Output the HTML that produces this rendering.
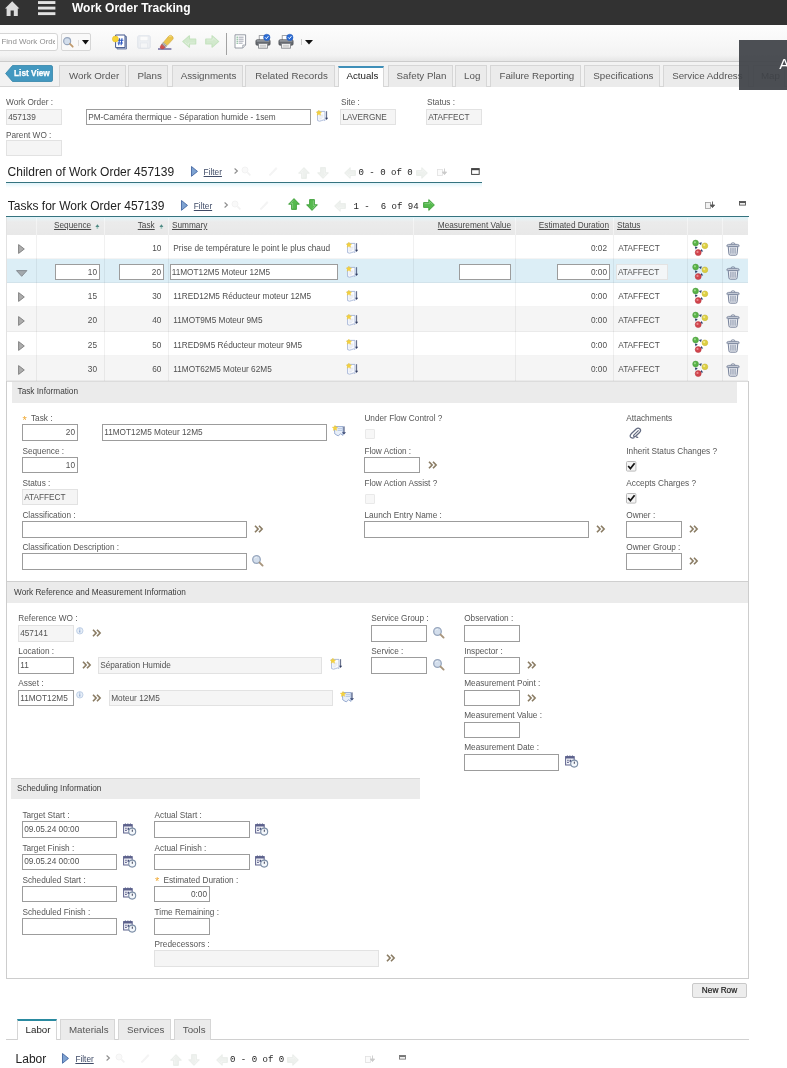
<!DOCTYPE html>
<html><head><meta charset="utf-8"><title>Work Order Tracking</title>
<style>
html,body{margin:0;padding:0;background:#fff}
body{will-change:transform;width:787px;height:1068px;position:relative;overflow:hidden;font-family:"Liberation Sans",sans-serif;font-size:8.25px;color:#4a4a4a}
.abs,.ic,.lb,.in,.tx,.tab,.hd,.sec{position:absolute;box-sizing:content-box;white-space:nowrap}
.ic{display:block;overflow:visible}
.lb{font-size:8.25px;color:#565656;line-height:10px}
.req{color:#f0a830;display:inline-block;width:8.6px;font-size:11px;line-height:6px;vertical-align:-2.5px;text-align:left}
.in{border:1px solid #9c9c9c;background:#fff;padding:0 2px 0 1.2px;font-size:8.25px;color:#525252;overflow:hidden}
.in.ro{border-color:#e2e2e2;background:#f5f5f5}
.tx{font-size:8.25px;color:#4f4f4f;line-height:10px}
.tab{top:65px;height:21px;line-height:19px;font-size:9.75px;color:#555;background:#ebebeb;border:1px solid #d6d6d6;border-bottom:none;text-align:center;padding-left:2.8px}
.hd{font-size:12px;color:#222;line-height:14px}
.sec{background:#ebebeb;font-size:8.25px;color:#3c3c3c;height:20px;line-height:21px;padding-left:6px}
.mono{font-family:"Liberation Mono",monospace;font-size:9.05px;color:#1e1e1e}
a.fl{color:#3e4a66;text-decoration:underline}
.th{position:absolute;font-size:8.25px;color:#484848;text-decoration:underline;line-height:10px;white-space:nowrap}
</style></head><body>

<div class="abs" style="left:0;top:0;width:787px;height:25px;background:#323232"></div>
<svg class="ic" style="left:4.5px;top:1px" width="15" height="15.4" viewBox="0 0 15 15.4" ><path d="M7.2 0.3 L14.4 7.6 L12.8 7.6 L12.8 15 L8.8 15 L8.8 9.4 L5.6 9.4 L5.6 15 L1.6 15 L1.6 7.6 L0 7.6 Z" fill="#dcdcdc"/></svg>
<svg class="ic" style="left:37.8px;top:1px" width="17.4" height="14.2" viewBox="0 0 17.4 14.2" ><rect x="0" y="0.1" width="17.4" height="2.9" fill="#e2e2e2"/><rect x="0" y="5.65" width="17.4" height="2.9" fill="#e2e2e2"/><rect x="0" y="11.2" width="17.4" height="2.9" fill="#e2e2e2"/></svg>
<div class="abs" style="left:72px;top:1px;font-size:12px;font-weight:bold;color:#fff;line-height:15px">Work Order Tracking</div>
<div class="abs" style="left:0;top:25px;width:787px;height:36px;background:linear-gradient(to bottom,#fdfdfd 0,#f7f7f7 55%,#f3f3f3 84%,#e6e6e6 100%);border-bottom:1px solid #cbcbcb"></div>
<div class="abs" style="left:-3px;top:33px;width:59.2px;height:16px;border:1px solid #d6d6d6;border-radius:3px;background:#fff"><div class="abs" style="left:3.5px;top:0;width:53.6px;height:16px;overflow:hidden;line-height:16.5px;font-size:7.9px;color:#8e8e8e">Find Work Order</div></div>
<div class="abs" style="left:61px;top:33px;width:28px;height:16px;border:1px solid #d6d6d6;border-radius:2px;background:#f9f9f9"></div>
<svg class="ic" style="left:62.8px;top:37.2px" width="11" height="11" viewBox="0 0 12 12" ><circle cx="4.5" cy="4.5" r="3.8" fill="#d3deec" stroke="#97a6bd" stroke-width="1.3"/><path d="M7.6 7.6 L10.6 10.6" stroke="#c09a6c" stroke-width="1.9" stroke-linecap="round"/></svg>
<div class="abs" style="left:78px;top:40px;width:1px;height:6px;background:#dcdcdc"></div>
<svg class="ic" style="left:81.5px;top:40.3px" width="7" height="4.6" viewBox="0 0 7 4.6" ><path d="M0 0 L7 0 L3.5 4.4 Z" fill="#111"/></svg>
<svg class="ic" style="left:112px;top:33.5px" width="16" height="16" viewBox="0 0 16 16" ><path d="M5 2.5 H14.5 V15 H5 Z" fill="#b8c4dc" stroke="#5a6c98" stroke-width="0.8"/><path d="M3.6 1 H13 V13.6 H3.6 Z" fill="#fff" stroke="#42578c" stroke-width="1"/><path d="M6 6.2h5.4M5.6 9h5.4M7.6 4.2l-0.9 7M10 4.2l-0.9 7" stroke="#2a55c0" stroke-width="1.1"/><circle cx="3.4" cy="5" r="3" fill="#f7d436" stroke="#e6b81c" stroke-width="0.5"/></svg>
<svg class="ic" style="left:137px;top:35px" width="14" height="14" viewBox="0 0 14 14" ><g opacity="0.4"><rect x="0.8" y="0.8" width="12.4" height="12.4" rx="1" fill="#dfe5ee" stroke="#b7c2d3" stroke-width="1"/><rect x="3" y="1.2" width="8" height="4.6" fill="#fff" stroke="#c3ccd9" stroke-width="0.6"/><rect x="3.6" y="8" width="6.8" height="5" fill="#f3f5f9" stroke="#c3ccd9" stroke-width="0.6"/></g></svg>
<svg class="ic" style="left:157px;top:33.6px" width="18" height="16" viewBox="0 0 18 16" ><path d="M1 15 H14.4" stroke="#4a4488" stroke-width="1.2"/><path d="M6.4 8.4 L11.8 2 Q13.2 0.6 14.8 1.8 L15.8 2.8 Q16.8 4.2 15.6 5.6 L10 11.6 Z" fill="#ebc54c" stroke="#cfa53a" stroke-width="0.6"/><path d="M12.2 2.4 Q13.4 1.6 14.4 2.6" fill="none" stroke="#f8e9a8" stroke-width="0.9"/><path d="M6.4 8.4 L10 11.6 L8.2 13.4 L4.6 10.4 Z" fill="#e6e6e6" stroke="#8a8a8a" stroke-width="0.5"/><path d="M5.7 9.2 L9.3 12.3 M5 10 L8.6 13" stroke="#555" stroke-width="0.6"/><path d="M4.6 10.4 L8.2 13.4 L6.2 14.8 Q4.4 15.2 3.4 14 Q2.8 12.6 4.6 10.4 Z" fill="#d2504e" stroke="#b03c3a" stroke-width="0.5"/></svg>
<svg class="ic" style="left:182px;top:35px" width="14.5" height="13" viewBox="0 0 12 12" preserveAspectRatio="none"><g transform="rotate(180 6 6)"><path d="M11.4 6 L5.8 0.6 L5.8 3.6 L0.6 3.6 L0.6 8.4 L5.8 8.4 L5.8 11.4 Z" fill="#d0e9cb" stroke="#c2e1bc" stroke-width="0.9" stroke-linejoin="round" opacity="0.95"/><path d="M1.4 4.6 H6.6 V2.6 L9.6 5.4" fill="none" stroke="#fff" stroke-width="0.7" opacity="0.33249999999999996"/></g></svg>
<svg class="ic" style="left:204.5px;top:35px" width="14.5" height="13" viewBox="0 0 12 12" preserveAspectRatio="none"><g transform="rotate(0 6 6)"><path d="M11.4 6 L5.8 0.6 L5.8 3.6 L0.6 3.6 L0.6 8.4 L5.8 8.4 L5.8 11.4 Z" fill="#d0e9cb" stroke="#c2e1bc" stroke-width="0.9" stroke-linejoin="round" opacity="0.95"/><path d="M1.4 4.6 H6.6 V2.6 L9.6 5.4" fill="none" stroke="#fff" stroke-width="0.7" opacity="0.33249999999999996"/></g></svg>
<div class="abs" style="left:226px;top:33px;width:1px;height:22px;background:#a2a2a2"></div>
<svg class="ic" style="left:233.5px;top:34px" width="13" height="15" viewBox="0 0 13 15" ><path d="M1 0.8 H11.6 V11 L8.8 14 H1 Z" fill="#fff" stroke="#8c929c" stroke-width="0.9"/><path d="M8.8 14 V11 H11.6" fill="#e4e6ea" stroke="#8c929c" stroke-width="0.7"/><path d="M2.6 3.2h1.2M2.6 5.2h1.2M2.6 7.2h1.2M2.6 9.2h1.2" stroke="#4f9a68" stroke-width="1"/><path d="M4.6 3.2h5M4.6 5.2h5M4.6 7.2h5M4.6 9.2h4" stroke="#8a90a0" stroke-width="0.8"/></svg>
<svg class="ic" style="left:254.5px;top:34px" width="17" height="15" viewBox="0 0 17 15" ><rect x="4.2" y="1.6" width="7.6" height="5" fill="#fff" stroke="#8a8d92" stroke-width="0.8"/><rect x="0.9" y="5.8" width="14.2" height="5.4" rx="1.2" fill="#666a70" stroke="#4a4d52" stroke-width="0.7"/><rect x="1.6" y="6.2" width="12.8" height="1.4" fill="#9a9ea4"/><rect x="3.6" y="9.6" width="8.8" height="4.6" fill="#efefef" stroke="#7c7f84" stroke-width="0.8"/><path d="M5 11.4h6M5 12.8h6" stroke="#b4b4b4" stroke-width="0.6"/><circle cx="11.8" cy="3.4" r="3.2" fill="#2c6cd4" stroke="#2257b0" stroke-width="0.5"/><path d="M10.2 3.4l1.2 1.3 2-2.5" fill="none" stroke="#fff" stroke-width="1"/></svg>
<svg class="ic" style="left:277.5px;top:34px" width="17" height="15" viewBox="0 0 17 15" ><rect x="4.2" y="1.6" width="7.6" height="5" fill="#fff" stroke="#8a8d92" stroke-width="0.8"/><rect x="0.9" y="5.8" width="14.2" height="5.4" rx="1.2" fill="#666a70" stroke="#4a4d52" stroke-width="0.7"/><rect x="1.6" y="6.2" width="12.8" height="1.4" fill="#9a9ea4"/><rect x="3.6" y="9.6" width="8.8" height="4.6" fill="#efefef" stroke="#7c7f84" stroke-width="0.8"/><path d="M5 11.4h6M5 12.8h6" stroke="#b4b4b4" stroke-width="0.6"/><circle cx="11.8" cy="3.4" r="3.2" fill="#2c6cd4" stroke="#2257b0" stroke-width="0.5"/><path d="M10.2 3.4l1.2 1.3 2-2.5" fill="none" stroke="#fff" stroke-width="1"/></svg>
<div class="abs" style="left:301px;top:39px;width:1px;height:6px;background:#c8c8c8"></div>
<svg class="ic" style="left:305px;top:40px" width="8" height="5" viewBox="0 0 8 5" ><path d="M0 0 L8 0 L4 4.6 Z" fill="#111"/></svg>
<div class="abs" style="left:0;top:62px;width:787px;height:24px;background:#f2f2f2;border-bottom:1px solid #d6d6d6"></div>
<svg class="ic" style="left:5px;top:65px" width="48" height="18" viewBox="0 0 48 18" ><path d="M7.5 0.5 H46 Q47.5 0.5 47.5 2 V15 Q47.5 16.5 46 16.5 H7.5 L0.6 8.5 Z" fill="#4398c0" stroke="#3585aa" stroke-width="0.8"/><text x="26.9" y="10.8" font-family="Liberation Sans,sans-serif" font-size="8.25" font-weight="bold" fill="#fff" stroke="#fff" stroke-width="0.25" text-anchor="middle">List View</text></svg>
<div class="tab" style="left:59.4px;width:61.8px">Work Order</div>
<div class="tab" style="left:128.4px;width:34.8px">Plans</div>
<div class="tab" style="left:171.6px;width:66.3px">Assignments</div>
<div class="tab" style="left:245.4px;width:84.60000000000001px">Related Records</div>
<div class="tab" style="left:337.7px;width:41.89999999999999px;top:66px;height:19px;background:#fff;border-top:2px solid #3f8fb8;color:#222;line-height:16px">Actuals</div>
<div class="tab" style="left:387.7px;width:60.10000000000004px">Safety Plan</div>
<div class="tab" style="left:454.8px;width:27.2px">Log</div>
<div class="tab" style="left:490px;width:86.2px">Failure Reporting</div>
<div class="tab" style="left:584px;width:71.2px">Specifications</div>
<div class="tab" style="left:662.5px;width:82.2px">Service Address</div>
<div class="tab" style="left:753px;width:27.2px">Map</div>
<div class="abs" style="left:739px;top:40px;width:48px;height:49.5px;background:rgba(62,66,71,0.93)"></div>
<div class="abs" style="left:779.2px;top:54.8px;font-size:15px;color:#fff;line-height:17px">A</div>
<div class="lb" style="left:6px;top:97.5px">Work Order :</div>
<div class="in ro" style="left:6px;top:109px;width:50.8px;height:14px;line-height:15.38px;">457139</div>
<div class="in" style="left:86px;top:109px;width:219.8px;height:14px;line-height:15.38px;">PM-Caméra thermique - Séparation humide - 1sem</div>
<svg class="ic" style="left:316px;top:110px" width="13" height="12" viewBox="0 0 13 12" ><path d="M1.6 1.4 H9 V10.4 Q7.4 9.4 5.6 10.6 Q3.6 11.8 1.6 10.6 Z" fill="#fbfcfe" stroke="#a3b3d6" stroke-width="0.9"/><path d="M3.2 5.2h4.2M3.2 7h4.2M3.2 8.8h2.6" stroke="#d3d9e6" stroke-width="0.7"/><path d="M2.9 0 L3.75 1.75 L5.7 2 L4.3 3.35 L4.65 5.3 L2.9 4.35 L1.15 5.3 L1.5 3.35 L0.1 2 L2.05 1.75 Z" fill="#f6d23c" stroke="#ecc22a" stroke-width="0.3"/><path d="M10.6 1.2v7.4" stroke="#303c62" stroke-width="0.8"/><path d="M9.1 7.8h3l-1.5 2.1z" fill="#303c62"/></svg>
<div class="lb" style="left:341px;top:97.5px">Site :</div>
<div class="in ro" style="left:340.3px;top:109px;width:50.8px;height:14px;line-height:15.38px;">LAVERGNE</div>
<div class="lb" style="left:427px;top:97.5px">Status :</div>
<div class="in ro" style="left:426px;top:109px;width:50.8px;height:14px;line-height:15.38px;">ATAFFECT</div>
<div class="lb" style="left:6px;top:130.5px">Parent WO :</div>
<div class="in ro" style="left:6px;top:140px;width:50.8px;height:14px;line-height:15.38px;"></div>
<div class="hd" style="left:7.6px;top:165px">Children of Work Order 457139</div>
<div class="abs" style="left:6px;top:182px;width:476px;height:1px;background:#35737f"></div>
<div class="abs" style="left:6px;top:183px;width:476px;height:5px;background:linear-gradient(to bottom,#def3f9,#f4fbfd 60%,#fff)"></div>
<svg class="ic" style="left:190.8px;top:165.8px" width="7.2" height="10.8" viewBox="0 0 7.2 10.8" ><path d="M0.5 0.5 L6.5 5.4 L0.5 10.3 Z" fill="#7ea3d2" stroke="#4467a2" stroke-width="0.9"/></svg><div class="tx" style="left:203.60000000000002px;top:167.5px"><a class="fl">Filter</a></div><svg class="ic" style="left:233.6px;top:168px" width="4" height="6" viewBox="0 0 4 6" ><path d="M0.6 0.5 L3.4 3 L0.6 5.5" fill="none" stroke="#8c8c8c" stroke-width="1.1"/></svg><svg class="ic" style="left:241px;top:166px" width="10" height="10" viewBox="0 0 10 10" ><g opacity="0.09"><circle cx="4" cy="4" r="3" fill="#c8c8c8" stroke="#777"/><path d="M6.4 6.4 L9.4 9.4" stroke="#777" stroke-width="1.6"/></g></svg><svg class="ic" style="left:268px;top:166px" width="10" height="10" viewBox="0 0 10 10" ><g opacity="0.1"><path d="M1 9 L8 1.6 L9 2.8 L2.4 9.4 Z" fill="#999" stroke="#777" stroke-width="0.6"/></g></svg>
<svg class="ic" style="left:298px;top:167px" width="12" height="12" viewBox="0 0 12 12" preserveAspectRatio="none"><g transform="rotate(-90 6 6)"><path d="M11.4 6 L5.8 0.6 L5.8 3.6 L0.6 3.6 L0.6 8.4 L5.8 8.4 L5.8 11.4 Z" fill="#eef1ee" stroke="#e9ece9" stroke-width="0.9" stroke-linejoin="round" opacity="1"/><path d="M1.4 4.6 H6.6 V2.6 L9.6 5.4" fill="none" stroke="#fff" stroke-width="0.7" opacity="0.35"/></g></svg>
<svg class="ic" style="left:317px;top:167px" width="12" height="12" viewBox="0 0 12 12" preserveAspectRatio="none"><g transform="rotate(90 6 6)"><path d="M11.4 6 L5.8 0.6 L5.8 3.6 L0.6 3.6 L0.6 8.4 L5.8 8.4 L5.8 11.4 Z" fill="#eef1ee" stroke="#e9ece9" stroke-width="0.9" stroke-linejoin="round" opacity="1"/><path d="M1.4 4.6 H6.6 V2.6 L9.6 5.4" fill="none" stroke="#fff" stroke-width="0.7" opacity="0.35"/></g></svg>
<svg class="ic" style="left:344px;top:167px" width="12" height="12" viewBox="0 0 12 12" preserveAspectRatio="none"><g transform="rotate(180 6 6)"><path d="M11.4 6 L5.8 0.6 L5.8 3.6 L0.6 3.6 L0.6 8.4 L5.8 8.4 L5.8 11.4 Z" fill="#eef1ee" stroke="#e9ece9" stroke-width="0.9" stroke-linejoin="round" opacity="1"/><path d="M1.4 4.6 H6.6 V2.6 L9.6 5.4" fill="none" stroke="#fff" stroke-width="0.7" opacity="0.35"/></g></svg>
<div class="abs mono" style="left:358.5px;top:167px;line-height:11px">0 - 0 of 0</div>
<svg class="ic" style="left:416px;top:167px" width="12" height="12" viewBox="0 0 12 12" preserveAspectRatio="none"><g transform="rotate(0 6 6)"><path d="M11.4 6 L5.8 0.6 L5.8 3.6 L0.6 3.6 L0.6 8.4 L5.8 8.4 L5.8 11.4 Z" fill="#eef1ee" stroke="#e9ece9" stroke-width="0.9" stroke-linejoin="round" opacity="1"/><path d="M1.4 4.6 H6.6 V2.6 L9.6 5.4" fill="none" stroke="#fff" stroke-width="0.7" opacity="0.35"/></g></svg>
<svg class="ic" style="left:437px;top:168px" width="11" height="9" viewBox="0 0 11 9" ><g opacity="0.3"><rect x="0.5" y="1.5" width="5" height="6" fill="#f2f2f2" stroke="#9a9a9a" stroke-width="0.8"/><path d="M7.5 0.5v5M5.4 4l2.1 2.6L9.6 4z" fill="#555" stroke="#555" stroke-width="0.9"/></g></svg>
<svg class="ic" style="left:471px;top:168px" width="9" height="7" viewBox="0 0 9 7" ><rect x="0.6" y="0.6" width="7.6" height="5.8" fill="#fff" stroke="#444" stroke-width="1"/><rect x="0.6" y="0.6" width="7.6" height="1.6" fill="#444"/></svg>
<div class="hd" style="left:7.8px;top:198.5px">Tasks for Work Order 457139</div>
<div class="abs" style="left:6px;top:216px;width:743px;height:1px;background:#35737f"></div>
<svg class="ic" style="left:180.9px;top:199.8px" width="7.2" height="10.8" viewBox="0 0 7.2 10.8" ><path d="M0.5 0.5 L6.5 5.4 L0.5 10.3 Z" fill="#7ea3d2" stroke="#4467a2" stroke-width="0.9"/></svg><div class="tx" style="left:193.8px;top:201.5px"><a class="fl">Filter</a></div><svg class="ic" style="left:224px;top:202px" width="4" height="6" viewBox="0 0 4 6" ><path d="M0.6 0.5 L3.4 3 L0.6 5.5" fill="none" stroke="#8c8c8c" stroke-width="1.1"/></svg><svg class="ic" style="left:231px;top:200px" width="10" height="10" viewBox="0 0 10 10" ><g opacity="0.09"><circle cx="4" cy="4" r="3" fill="#c8c8c8" stroke="#777"/><path d="M6.4 6.4 L9.4 9.4" stroke="#777" stroke-width="1.6"/></g></svg><svg class="ic" style="left:259px;top:200px" width="10" height="10" viewBox="0 0 10 10" ><g opacity="0.1"><path d="M1 9 L8 1.6 L9 2.8 L2.4 9.4 Z" fill="#999" stroke="#777" stroke-width="0.6"/></g></svg>
<svg class="ic" style="left:288px;top:198.3px" width="12" height="12" viewBox="0 0 12 12" preserveAspectRatio="none"><g transform="rotate(-90 6 6)"><path d="M11.4 6 L5.8 0.6 L5.8 3.6 L0.6 3.6 L0.6 8.4 L5.8 8.4 L5.8 11.4 Z" fill="#56ba4e" stroke="#3d9e38" stroke-width="0.9" stroke-linejoin="round" opacity="1"/><path d="M1.4 4.6 H6.6 V2.6 L9.6 5.4" fill="none" stroke="#fff" stroke-width="0.7" opacity="0.35"/></g></svg>
<svg class="ic" style="left:306.3px;top:198.6px" width="12" height="12" viewBox="0 0 12 12" preserveAspectRatio="none"><g transform="rotate(90 6 6)"><path d="M11.4 6 L5.8 0.6 L5.8 3.6 L0.6 3.6 L0.6 8.4 L5.8 8.4 L5.8 11.4 Z" fill="#56ba4e" stroke="#3d9e38" stroke-width="0.9" stroke-linejoin="round" opacity="1"/><path d="M1.4 4.6 H6.6 V2.6 L9.6 5.4" fill="none" stroke="#fff" stroke-width="0.7" opacity="0.35"/></g></svg>
<svg class="ic" style="left:334px;top:200px" width="12" height="12" viewBox="0 0 12 12" preserveAspectRatio="none"><g transform="rotate(180 6 6)"><path d="M11.4 6 L5.8 0.6 L5.8 3.6 L0.6 3.6 L0.6 8.4 L5.8 8.4 L5.8 11.4 Z" fill="#eef1ee" stroke="#e9ece9" stroke-width="0.9" stroke-linejoin="round" opacity="1"/><path d="M1.4 4.6 H6.6 V2.6 L9.6 5.4" fill="none" stroke="#fff" stroke-width="0.7" opacity="0.35"/></g></svg>
<div class="abs mono" style="left:353.5px;top:200.5px;line-height:11px;white-space:pre">1 -  6 of 94</div>
<svg class="ic" style="left:423px;top:199px" width="12" height="12" viewBox="0 0 12 12" preserveAspectRatio="none"><g transform="rotate(0 6 6)"><path d="M11.4 6 L5.8 0.6 L5.8 3.6 L0.6 3.6 L0.6 8.4 L5.8 8.4 L5.8 11.4 Z" fill="#56ba4e" stroke="#3d9e38" stroke-width="0.9" stroke-linejoin="round" opacity="1"/><path d="M1.4 4.6 H6.6 V2.6 L9.6 5.4" fill="none" stroke="#fff" stroke-width="0.7" opacity="0.35"/></g></svg>
<svg class="ic" style="left:705px;top:201px" width="11" height="9" viewBox="0 0 11 9" ><g opacity="1"><rect x="0.5" y="1.5" width="5" height="6" fill="#f2f2f2" stroke="#9a9a9a" stroke-width="0.8"/><path d="M7.5 0.5v5M5.4 4l2.1 2.6L9.6 4z" fill="#555" stroke="#555" stroke-width="0.9"/></g></svg>
<svg class="ic" style="left:739px;top:201px" width="7" height="5" viewBox="0 0 7 5" ><g opacity="1.0"><rect x="0.5" y="0.5" width="6" height="3.6" fill="#fff" stroke="#555" stroke-width="0.9"/><rect x="0.5" y="0.5" width="6" height="1.6" fill="#555"/></g></svg>
<div class="abs" style="left:7px;top:217px;width:741px;height:18px;background:linear-gradient(to bottom,#dff3f9 0,#eaf0f1 3px,#ebebeb 5px,#e8e8e8 100%)"></div>
<div class="th" style="right:695.8px;top:221px">Sequence</div>
<svg class="ic" style="left:95.3px;top:223.5px" width="5" height="5" viewBox="0 0 5 5" ><path d="M0.4 3 L4.4 3 L2.4 0.2 Z" fill="#4f8a84"/><path d="M1.6 3 h1.6 v1.8 h-1.6z" fill="#9cc4bc"/></svg>
<div class="th" style="right:632.3px;top:221px">Task</div>
<svg class="ic" style="left:158.5px;top:223.5px" width="5" height="5" viewBox="0 0 5 5" ><path d="M0.4 3 L4.4 3 L2.4 0.2 Z" fill="#4f8a84"/><path d="M1.6 3 h1.6 v1.8 h-1.6z" fill="#9cc4bc"/></svg>
<div class="th" style="left:172px;top:221px">Summary</div>
<div class="th" style="right:276px;top:221px">Measurement Value</div>
<div class="th" style="right:178px;top:221px">Estimated Duration</div>
<div class="th" style="left:617px;top:221px">Status</div>
<div class="abs" style="left:7px;top:235px;width:741px;height:24px;background:#fff"></div>
<svg class="ic" style="left:18.3px;top:244px" width="7" height="10" viewBox="0 0 7 10" ><path d="M0.6 0.6 L6.3 5 L0.6 9.4 Z" fill="#adadad" stroke="#858585" stroke-width="1"/></svg>
<div class="tx" style="right:690px;top:244px"></div>
<div class="tx" style="right:625.6px;top:244px">10</div>
<div class="tx" style="left:173.3px;top:244px">Prise de température le point le plus chaud</div>
<div class="tx" style="right:180px;top:244px">0:02</div>
<div class="tx" style="left:618.3px;top:244px">ATAFFECT</div>
<svg class="ic" style="left:346px;top:242px" width="13" height="12" viewBox="0 0 13 12" ><path d="M1.6 1.4 H9 V10.4 Q7.4 9.4 5.6 10.6 Q3.6 11.8 1.6 10.6 Z" fill="#fbfcfe" stroke="#a3b3d6" stroke-width="0.9"/><path d="M3.2 5.2h4.2M3.2 7h4.2M3.2 8.8h2.6" stroke="#d3d9e6" stroke-width="0.7"/><path d="M2.9 0 L3.75 1.75 L5.7 2 L4.3 3.35 L4.65 5.3 L2.9 4.35 L1.15 5.3 L1.5 3.35 L0.1 2 L2.05 1.75 Z" fill="#f6d23c" stroke="#ecc22a" stroke-width="0.3"/><path d="M10.6 1.2v7.4" stroke="#303c62" stroke-width="0.8"/><path d="M9.1 7.8h3l-1.5 2.1z" fill="#303c62"/></svg>
<svg class="ic" style="left:692px;top:240px" width="17" height="16" viewBox="0 0 17 16" ><path d="M6.8 3 L9.8 2.2 L9 5.2 Z M2.8 6.4 L5.8 7 L3.6 9.4 Z M9.4 9 L11.2 11.6 L8.2 11.4 Z" fill="#2f456e"/><circle cx="3.6" cy="3" r="2.9" fill="#58b246" stroke="#46963a" stroke-width="0.5"/><circle cx="12.9" cy="5.8" r="2.9" fill="#dccf42" stroke="#c4b430" stroke-width="0.5"/><circle cx="6.2" cy="12.6" r="3" fill="#d2444c" stroke="#b4323a" stroke-width="0.5"/><circle cx="2.9" cy="2.3" r="1.1" fill="#a8e09a" opacity="0.8"/><circle cx="12.2" cy="5.1" r="1.1" fill="#f6f0a0" opacity="0.8"/><circle cx="5.5" cy="11.9" r="1.1" fill="#f0a0a4" opacity="0.8"/></svg>
<svg class="ic" style="left:726px;top:242px" width="14" height="15" viewBox="0 0 14 15" ><path d="M2.2 4.6 L2.9 11.8 Q3 13.2 4.4 13.2 L9.6 13.2 Q11 13.2 11.1 11.8 L11.8 4.6 Z" fill="#e9ecf1" stroke="#77829a" stroke-width="1"/><path d="M0.8 4.2 Q0.8 2.4 2.6 2.4 H11.4 Q13.2 2.4 13.2 4.2 Z" fill="#dfe3ea" stroke="#77829a" stroke-width="0.9"/><path d="M5 2.2 Q5 0.8 7 0.8 Q9 0.8 9 2.2" fill="none" stroke="#77829a" stroke-width="0.9"/><path d="M4.9 5.8 V11.8 M7 5.8 V11.8 M9.1 5.8 V11.8" stroke="#8d97ac" stroke-width="1.1"/></svg>
<div class="abs" style="left:7px;top:259px;width:741px;height:24px;background:#dceef6"></div>
<svg class="ic" style="left:15.9px;top:269.6px" width="11.4" height="7" viewBox="0 0 11.4 7" ><path d="M0.5 0.6 L10.9 0.6 L5.7 6.3 Z" fill="#a3a9ad" stroke="#7f858a" stroke-width="0.9"/></svg>
<div class="in" style="left:55px;top:264px;width:39.8px;height:14px;line-height:15.38px;text-align:right;">10</div>
<div class="in" style="left:119px;top:264px;width:39.8px;height:14px;line-height:15.38px;text-align:right;">20</div>
<div class="in" style="left:169.5px;top:264px;width:163.8px;height:14px;line-height:15.38px;">11MOT12M5 Moteur 12M5</div>
<div class="in" style="left:459px;top:264px;width:46.8px;height:14px;line-height:15.38px;"></div>
<div class="in" style="left:557px;top:264px;width:47.8px;height:14px;line-height:15.38px;text-align:right;">0:00</div>
<div class="in ro" style="left:615.7px;top:264px;width:47.5px;height:14px;line-height:16px;border-color:#e3e3e3;background:#f3f6f8">ATAFFECT</div>
<svg class="ic" style="left:346px;top:266px" width="13" height="12" viewBox="0 0 13 12" ><path d="M1.6 1.4 H9 V10.4 Q7.4 9.4 5.6 10.6 Q3.6 11.8 1.6 10.6 Z" fill="#fbfcfe" stroke="#a3b3d6" stroke-width="0.9"/><path d="M3.2 5.2h4.2M3.2 7h4.2M3.2 8.8h2.6" stroke="#d3d9e6" stroke-width="0.7"/><path d="M2.9 0 L3.75 1.75 L5.7 2 L4.3 3.35 L4.65 5.3 L2.9 4.35 L1.15 5.3 L1.5 3.35 L0.1 2 L2.05 1.75 Z" fill="#f6d23c" stroke="#ecc22a" stroke-width="0.3"/><path d="M10.6 1.2v7.4" stroke="#303c62" stroke-width="0.8"/><path d="M9.1 7.8h3l-1.5 2.1z" fill="#303c62"/></svg>
<svg class="ic" style="left:692px;top:264px" width="17" height="16" viewBox="0 0 17 16" ><path d="M6.8 3 L9.8 2.2 L9 5.2 Z M2.8 6.4 L5.8 7 L3.6 9.4 Z M9.4 9 L11.2 11.6 L8.2 11.4 Z" fill="#2f456e"/><circle cx="3.6" cy="3" r="2.9" fill="#58b246" stroke="#46963a" stroke-width="0.5"/><circle cx="12.9" cy="5.8" r="2.9" fill="#dccf42" stroke="#c4b430" stroke-width="0.5"/><circle cx="6.2" cy="12.6" r="3" fill="#d2444c" stroke="#b4323a" stroke-width="0.5"/><circle cx="2.9" cy="2.3" r="1.1" fill="#a8e09a" opacity="0.8"/><circle cx="12.2" cy="5.1" r="1.1" fill="#f6f0a0" opacity="0.8"/><circle cx="5.5" cy="11.9" r="1.1" fill="#f0a0a4" opacity="0.8"/></svg>
<svg class="ic" style="left:726px;top:266px" width="14" height="15" viewBox="0 0 14 15" ><path d="M2.2 4.6 L2.9 11.8 Q3 13.2 4.4 13.2 L9.6 13.2 Q11 13.2 11.1 11.8 L11.8 4.6 Z" fill="#e9ecf1" stroke="#77829a" stroke-width="1"/><path d="M0.8 4.2 Q0.8 2.4 2.6 2.4 H11.4 Q13.2 2.4 13.2 4.2 Z" fill="#dfe3ea" stroke="#77829a" stroke-width="0.9"/><path d="M5 2.2 Q5 0.8 7 0.8 Q9 0.8 9 2.2" fill="none" stroke="#77829a" stroke-width="0.9"/><path d="M4.9 5.8 V11.8 M7 5.8 V11.8 M9.1 5.8 V11.8" stroke="#8d97ac" stroke-width="1.1"/></svg>
<div class="abs" style="left:7px;top:283px;width:741px;height:24px;background:#fff"></div>
<svg class="ic" style="left:18.3px;top:292px" width="7" height="10" viewBox="0 0 7 10" ><path d="M0.6 0.6 L6.3 5 L0.6 9.4 Z" fill="#adadad" stroke="#858585" stroke-width="1"/></svg>
<div class="tx" style="right:690px;top:292px">15</div>
<div class="tx" style="right:625.6px;top:292px">30</div>
<div class="tx" style="left:173.3px;top:292px">11RED12M5 Réducteur moteur 12M5</div>
<div class="tx" style="right:180px;top:292px">0:00</div>
<div class="tx" style="left:618.3px;top:292px">ATAFFECT</div>
<svg class="ic" style="left:346px;top:290px" width="13" height="12" viewBox="0 0 13 12" ><path d="M1.6 1.4 H9 V10.4 Q7.4 9.4 5.6 10.6 Q3.6 11.8 1.6 10.6 Z" fill="#fbfcfe" stroke="#a3b3d6" stroke-width="0.9"/><path d="M3.2 5.2h4.2M3.2 7h4.2M3.2 8.8h2.6" stroke="#d3d9e6" stroke-width="0.7"/><path d="M2.9 0 L3.75 1.75 L5.7 2 L4.3 3.35 L4.65 5.3 L2.9 4.35 L1.15 5.3 L1.5 3.35 L0.1 2 L2.05 1.75 Z" fill="#f6d23c" stroke="#ecc22a" stroke-width="0.3"/><path d="M10.6 1.2v7.4" stroke="#303c62" stroke-width="0.8"/><path d="M9.1 7.8h3l-1.5 2.1z" fill="#303c62"/></svg>
<svg class="ic" style="left:692px;top:288px" width="17" height="16" viewBox="0 0 17 16" ><path d="M6.8 3 L9.8 2.2 L9 5.2 Z M2.8 6.4 L5.8 7 L3.6 9.4 Z M9.4 9 L11.2 11.6 L8.2 11.4 Z" fill="#2f456e"/><circle cx="3.6" cy="3" r="2.9" fill="#58b246" stroke="#46963a" stroke-width="0.5"/><circle cx="12.9" cy="5.8" r="2.9" fill="#dccf42" stroke="#c4b430" stroke-width="0.5"/><circle cx="6.2" cy="12.6" r="3" fill="#d2444c" stroke="#b4323a" stroke-width="0.5"/><circle cx="2.9" cy="2.3" r="1.1" fill="#a8e09a" opacity="0.8"/><circle cx="12.2" cy="5.1" r="1.1" fill="#f6f0a0" opacity="0.8"/><circle cx="5.5" cy="11.9" r="1.1" fill="#f0a0a4" opacity="0.8"/></svg>
<svg class="ic" style="left:726px;top:290px" width="14" height="15" viewBox="0 0 14 15" ><path d="M2.2 4.6 L2.9 11.8 Q3 13.2 4.4 13.2 L9.6 13.2 Q11 13.2 11.1 11.8 L11.8 4.6 Z" fill="#e9ecf1" stroke="#77829a" stroke-width="1"/><path d="M0.8 4.2 Q0.8 2.4 2.6 2.4 H11.4 Q13.2 2.4 13.2 4.2 Z" fill="#dfe3ea" stroke="#77829a" stroke-width="0.9"/><path d="M5 2.2 Q5 0.8 7 0.8 Q9 0.8 9 2.2" fill="none" stroke="#77829a" stroke-width="0.9"/><path d="M4.9 5.8 V11.8 M7 5.8 V11.8 M9.1 5.8 V11.8" stroke="#8d97ac" stroke-width="1.1"/></svg>
<div class="abs" style="left:7px;top:307px;width:741px;height:25px;background:#f5f5f5"></div>
<svg class="ic" style="left:18.3px;top:316px" width="7" height="10" viewBox="0 0 7 10" ><path d="M0.6 0.6 L6.3 5 L0.6 9.4 Z" fill="#adadad" stroke="#858585" stroke-width="1"/></svg>
<div class="tx" style="right:690px;top:316px">20</div>
<div class="tx" style="right:625.6px;top:316px">40</div>
<div class="tx" style="left:173.3px;top:316px">11MOT9M5 Moteur 9M5</div>
<div class="tx" style="right:180px;top:316px">0:00</div>
<div class="tx" style="left:618.3px;top:316px">ATAFFECT</div>
<svg class="ic" style="left:346px;top:314px" width="13" height="12" viewBox="0 0 13 12" ><path d="M1.6 1.4 H9 V10.4 Q7.4 9.4 5.6 10.6 Q3.6 11.8 1.6 10.6 Z" fill="#fbfcfe" stroke="#a3b3d6" stroke-width="0.9"/><path d="M3.2 5.2h4.2M3.2 7h4.2M3.2 8.8h2.6" stroke="#d3d9e6" stroke-width="0.7"/><path d="M2.9 0 L3.75 1.75 L5.7 2 L4.3 3.35 L4.65 5.3 L2.9 4.35 L1.15 5.3 L1.5 3.35 L0.1 2 L2.05 1.75 Z" fill="#f6d23c" stroke="#ecc22a" stroke-width="0.3"/><path d="M10.6 1.2v7.4" stroke="#303c62" stroke-width="0.8"/><path d="M9.1 7.8h3l-1.5 2.1z" fill="#303c62"/></svg>
<svg class="ic" style="left:692px;top:312px" width="17" height="16" viewBox="0 0 17 16" ><path d="M6.8 3 L9.8 2.2 L9 5.2 Z M2.8 6.4 L5.8 7 L3.6 9.4 Z M9.4 9 L11.2 11.6 L8.2 11.4 Z" fill="#2f456e"/><circle cx="3.6" cy="3" r="2.9" fill="#58b246" stroke="#46963a" stroke-width="0.5"/><circle cx="12.9" cy="5.8" r="2.9" fill="#dccf42" stroke="#c4b430" stroke-width="0.5"/><circle cx="6.2" cy="12.6" r="3" fill="#d2444c" stroke="#b4323a" stroke-width="0.5"/><circle cx="2.9" cy="2.3" r="1.1" fill="#a8e09a" opacity="0.8"/><circle cx="12.2" cy="5.1" r="1.1" fill="#f6f0a0" opacity="0.8"/><circle cx="5.5" cy="11.9" r="1.1" fill="#f0a0a4" opacity="0.8"/></svg>
<svg class="ic" style="left:726px;top:314px" width="14" height="15" viewBox="0 0 14 15" ><path d="M2.2 4.6 L2.9 11.8 Q3 13.2 4.4 13.2 L9.6 13.2 Q11 13.2 11.1 11.8 L11.8 4.6 Z" fill="#e9ecf1" stroke="#77829a" stroke-width="1"/><path d="M0.8 4.2 Q0.8 2.4 2.6 2.4 H11.4 Q13.2 2.4 13.2 4.2 Z" fill="#dfe3ea" stroke="#77829a" stroke-width="0.9"/><path d="M5 2.2 Q5 0.8 7 0.8 Q9 0.8 9 2.2" fill="none" stroke="#77829a" stroke-width="0.9"/><path d="M4.9 5.8 V11.8 M7 5.8 V11.8 M9.1 5.8 V11.8" stroke="#8d97ac" stroke-width="1.1"/></svg>
<div class="abs" style="left:7px;top:332px;width:741px;height:24px;background:#fff"></div>
<svg class="ic" style="left:18.3px;top:341px" width="7" height="10" viewBox="0 0 7 10" ><path d="M0.6 0.6 L6.3 5 L0.6 9.4 Z" fill="#adadad" stroke="#858585" stroke-width="1"/></svg>
<div class="tx" style="right:690px;top:341px">25</div>
<div class="tx" style="right:625.6px;top:341px">50</div>
<div class="tx" style="left:173.3px;top:341px">11RED9M5 Réducteur moteur 9M5</div>
<div class="tx" style="right:180px;top:341px">0:00</div>
<div class="tx" style="left:618.3px;top:341px">ATAFFECT</div>
<svg class="ic" style="left:346px;top:339px" width="13" height="12" viewBox="0 0 13 12" ><path d="M1.6 1.4 H9 V10.4 Q7.4 9.4 5.6 10.6 Q3.6 11.8 1.6 10.6 Z" fill="#fbfcfe" stroke="#a3b3d6" stroke-width="0.9"/><path d="M3.2 5.2h4.2M3.2 7h4.2M3.2 8.8h2.6" stroke="#d3d9e6" stroke-width="0.7"/><path d="M2.9 0 L3.75 1.75 L5.7 2 L4.3 3.35 L4.65 5.3 L2.9 4.35 L1.15 5.3 L1.5 3.35 L0.1 2 L2.05 1.75 Z" fill="#f6d23c" stroke="#ecc22a" stroke-width="0.3"/><path d="M10.6 1.2v7.4" stroke="#303c62" stroke-width="0.8"/><path d="M9.1 7.8h3l-1.5 2.1z" fill="#303c62"/></svg>
<svg class="ic" style="left:692px;top:337px" width="17" height="16" viewBox="0 0 17 16" ><path d="M6.8 3 L9.8 2.2 L9 5.2 Z M2.8 6.4 L5.8 7 L3.6 9.4 Z M9.4 9 L11.2 11.6 L8.2 11.4 Z" fill="#2f456e"/><circle cx="3.6" cy="3" r="2.9" fill="#58b246" stroke="#46963a" stroke-width="0.5"/><circle cx="12.9" cy="5.8" r="2.9" fill="#dccf42" stroke="#c4b430" stroke-width="0.5"/><circle cx="6.2" cy="12.6" r="3" fill="#d2444c" stroke="#b4323a" stroke-width="0.5"/><circle cx="2.9" cy="2.3" r="1.1" fill="#a8e09a" opacity="0.8"/><circle cx="12.2" cy="5.1" r="1.1" fill="#f6f0a0" opacity="0.8"/><circle cx="5.5" cy="11.9" r="1.1" fill="#f0a0a4" opacity="0.8"/></svg>
<svg class="ic" style="left:726px;top:339px" width="14" height="15" viewBox="0 0 14 15" ><path d="M2.2 4.6 L2.9 11.8 Q3 13.2 4.4 13.2 L9.6 13.2 Q11 13.2 11.1 11.8 L11.8 4.6 Z" fill="#e9ecf1" stroke="#77829a" stroke-width="1"/><path d="M0.8 4.2 Q0.8 2.4 2.6 2.4 H11.4 Q13.2 2.4 13.2 4.2 Z" fill="#dfe3ea" stroke="#77829a" stroke-width="0.9"/><path d="M5 2.2 Q5 0.8 7 0.8 Q9 0.8 9 2.2" fill="none" stroke="#77829a" stroke-width="0.9"/><path d="M4.9 5.8 V11.8 M7 5.8 V11.8 M9.1 5.8 V11.8" stroke="#8d97ac" stroke-width="1.1"/></svg>
<div class="abs" style="left:7px;top:356px;width:741px;height:25px;background:#f5f5f5"></div>
<svg class="ic" style="left:18.3px;top:365px" width="7" height="10" viewBox="0 0 7 10" ><path d="M0.6 0.6 L6.3 5 L0.6 9.4 Z" fill="#adadad" stroke="#858585" stroke-width="1"/></svg>
<div class="tx" style="right:690px;top:365px">30</div>
<div class="tx" style="right:625.6px;top:365px">60</div>
<div class="tx" style="left:173.3px;top:365px">11MOT62M5 Moteur 62M5</div>
<div class="tx" style="right:180px;top:365px">0:00</div>
<div class="tx" style="left:618.3px;top:365px">ATAFFECT</div>
<svg class="ic" style="left:346px;top:363px" width="13" height="12" viewBox="0 0 13 12" ><path d="M1.6 1.4 H9 V10.4 Q7.4 9.4 5.6 10.6 Q3.6 11.8 1.6 10.6 Z" fill="#fbfcfe" stroke="#a3b3d6" stroke-width="0.9"/><path d="M3.2 5.2h4.2M3.2 7h4.2M3.2 8.8h2.6" stroke="#d3d9e6" stroke-width="0.7"/><path d="M2.9 0 L3.75 1.75 L5.7 2 L4.3 3.35 L4.65 5.3 L2.9 4.35 L1.15 5.3 L1.5 3.35 L0.1 2 L2.05 1.75 Z" fill="#f6d23c" stroke="#ecc22a" stroke-width="0.3"/><path d="M10.6 1.2v7.4" stroke="#303c62" stroke-width="0.8"/><path d="M9.1 7.8h3l-1.5 2.1z" fill="#303c62"/></svg>
<svg class="ic" style="left:692px;top:361px" width="17" height="16" viewBox="0 0 17 16" ><path d="M6.8 3 L9.8 2.2 L9 5.2 Z M2.8 6.4 L5.8 7 L3.6 9.4 Z M9.4 9 L11.2 11.6 L8.2 11.4 Z" fill="#2f456e"/><circle cx="3.6" cy="3" r="2.9" fill="#58b246" stroke="#46963a" stroke-width="0.5"/><circle cx="12.9" cy="5.8" r="2.9" fill="#dccf42" stroke="#c4b430" stroke-width="0.5"/><circle cx="6.2" cy="12.6" r="3" fill="#d2444c" stroke="#b4323a" stroke-width="0.5"/><circle cx="2.9" cy="2.3" r="1.1" fill="#a8e09a" opacity="0.8"/><circle cx="12.2" cy="5.1" r="1.1" fill="#f6f0a0" opacity="0.8"/><circle cx="5.5" cy="11.9" r="1.1" fill="#f0a0a4" opacity="0.8"/></svg>
<svg class="ic" style="left:726px;top:363px" width="14" height="15" viewBox="0 0 14 15" ><path d="M2.2 4.6 L2.9 11.8 Q3 13.2 4.4 13.2 L9.6 13.2 Q11 13.2 11.1 11.8 L11.8 4.6 Z" fill="#e9ecf1" stroke="#77829a" stroke-width="1"/><path d="M0.8 4.2 Q0.8 2.4 2.6 2.4 H11.4 Q13.2 2.4 13.2 4.2 Z" fill="#dfe3ea" stroke="#77829a" stroke-width="0.9"/><path d="M5 2.2 Q5 0.8 7 0.8 Q9 0.8 9 2.2" fill="none" stroke="#77829a" stroke-width="0.9"/><path d="M4.9 5.8 V11.8 M7 5.8 V11.8 M9.1 5.8 V11.8" stroke="#8d97ac" stroke-width="1.1"/></svg>
<div class="abs" style="left:6px;top:217px;width:1px;height:164px;background:#e2e2e2"></div>
<div class="abs" style="left:7px;top:258px;width:741px;height:1px;background:rgba(0,0,0,0.045)"></div>
<div class="abs" style="left:7px;top:282px;width:741px;height:1px;background:rgba(0,0,0,0.045)"></div>
<div class="abs" style="left:7px;top:306px;width:741px;height:1px;background:rgba(0,0,0,0.045)"></div>
<div class="abs" style="left:7px;top:331px;width:741px;height:1px;background:rgba(0,0,0,0.045)"></div>
<div class="abs" style="left:7px;top:355px;width:741px;height:1px;background:rgba(0,0,0,0.045)"></div>
<div class="abs" style="left:7px;top:380px;width:741px;height:1px;background:rgba(0,0,0,0.045)"></div>
<div class="abs" style="left:36px;top:235px;width:1px;height:146px;background:rgba(0,0,0,0.055)"></div>
<div class="abs" style="left:36px;top:218px;width:1px;height:17px;background:rgba(255,255,255,0.45)"></div>
<div class="abs" style="left:104px;top:235px;width:1px;height:146px;background:rgba(0,0,0,0.055)"></div>
<div class="abs" style="left:104px;top:218px;width:1px;height:17px;background:rgba(255,255,255,0.45)"></div>
<div class="abs" style="left:168px;top:235px;width:1px;height:146px;background:rgba(0,0,0,0.055)"></div>
<div class="abs" style="left:168px;top:218px;width:1px;height:17px;background:rgba(255,255,255,0.45)"></div>
<div class="abs" style="left:413px;top:235px;width:1px;height:146px;background:rgba(0,0,0,0.055)"></div>
<div class="abs" style="left:413px;top:218px;width:1px;height:17px;background:rgba(255,255,255,0.45)"></div>
<div class="abs" style="left:515px;top:235px;width:1px;height:146px;background:rgba(0,0,0,0.055)"></div>
<div class="abs" style="left:515px;top:218px;width:1px;height:17px;background:rgba(255,255,255,0.45)"></div>
<div class="abs" style="left:613px;top:235px;width:1px;height:146px;background:rgba(0,0,0,0.055)"></div>
<div class="abs" style="left:613px;top:218px;width:1px;height:17px;background:rgba(255,255,255,0.45)"></div>
<div class="abs" style="left:687px;top:235px;width:1px;height:146px;background:rgba(0,0,0,0.055)"></div>
<div class="abs" style="left:687px;top:218px;width:1px;height:17px;background:rgba(255,255,255,0.45)"></div>
<div class="abs" style="left:722px;top:235px;width:1px;height:146px;background:rgba(0,0,0,0.055)"></div>
<div class="abs" style="left:722px;top:218px;width:1px;height:17px;background:rgba(255,255,255,0.45)"></div>
<div class="abs" style="left:6px;top:381px;width:741px;height:597px;border:1px solid #cdcdcd;border-top:none"></div>
<div class="abs" style="left:7px;top:381px;width:741px;height:1px;background:#dcdcdc"></div>
<div class="sec" style="left:11.5px;top:382px;width:719px;height:21px;line-height:20px">Task Information</div>
<div class="lb" style="left:22.4px;top:414.4px"><span class="req">*</span>Task :</div>
<div class="in" style="left:22px;top:424px;width:50.8px;height:15px;line-height:16.68px;text-align:right;">20</div>
<div class="in" style="left:102px;top:424px;width:219.8px;height:15px;line-height:16.68px;">11MOT12M5 Moteur 12M5</div>
<svg class="ic" style="left:332px;top:425.45px" width="14" height="13" viewBox="0 0 14 13" ><path d="M2.6 1.6 H11 V6.2 L11 10.4 L8.6 8.8 L6.2 10.8 L3.8 9.6 Q2.6 9.4 2.6 7.6 Z" fill="#e8eff9" stroke="#8da3cc" stroke-width="0.9"/><path d="M5.6 3.6h4.4M5.6 5.4h4.4" stroke="#a9bbdc" stroke-width="0.8"/><path d="M3 0.2 L3.85 1.95 L5.8 2.2 L4.4 3.55 L4.75 5.5 L3 4.55 L1.25 5.5 L1.6 3.55 L0.2 2.2 L2.15 1.95 Z" fill="#f6d23c" stroke="#ecc22a" stroke-width="0.3"/><path d="M12 1.4v6" stroke="#2f3f6c" stroke-width="1"/><path d="M10 7.2h4l-2 2.3z" fill="#2f3f6c"/></svg>
<div class="lb" style="left:22.4px;top:446.6px">Sequence :</div>
<div class="in" style="left:22px;top:457px;width:50.8px;height:14px;line-height:15.18px;text-align:right;">10</div>
<div class="lb" style="left:22.4px;top:478.9px">Status :</div>
<div class="in ro" style="left:22px;top:489px;width:50.8px;height:14px;line-height:15.68px;">ATAFFECT</div>
<div class="lb" style="left:22.4px;top:511.1px">Classification :</div>
<div class="in" style="left:22px;top:521px;width:219.8px;height:15px;line-height:16.18px;"></div>
<svg class="ic" style="left:254px;top:525.2px" width="9" height="8" viewBox="0 0 9 8" ><path d="M1 0.7 L4.1 4 L1 7.3 M5 0.7 L8.1 4 L5 7.3" fill="none" stroke="#8a7c64" stroke-width="1.65"/></svg>
<div class="lb" style="left:22.4px;top:543.4px">Classification Description :</div>
<div class="in" style="left:22px;top:553px;width:219.8px;height:15px;line-height:16.68px;"></div>
<svg class="ic" style="left:252.4px;top:555.45px" width="12" height="12" viewBox="0 0 12 12" ><circle cx="4.5" cy="4.5" r="3.8" fill="#d3deec" stroke="#97a6bd" stroke-width="1.3"/><path d="M2.6 3.4 Q3.4 2.2 4.8 2.2" fill="none" stroke="#f2f6fb" stroke-width="0.9"/><path d="M7.6 7.6 L10.6 10.6" stroke="#a8957c" stroke-width="1.9" stroke-linecap="round"/></svg>
<div class="lb" style="left:364.4px;top:414.4px">Under Flow Control ?</div>
<div class="abs" style="left:364.5px;top:429px;width:8px;height:8px;border:1px solid #e9e9e9;background:#f7f7f7;border-radius:1px"></div>
<div class="lb" style="left:364.4px;top:446.6px">Flow Action :</div>
<div class="in" style="left:364px;top:457px;width:50.8px;height:14px;line-height:15.18px;"></div>
<svg class="ic" style="left:427.7px;top:460.7px" width="9" height="8" viewBox="0 0 9 8" ><path d="M1 0.7 L4.1 4 L1 7.3 M5 0.7 L8.1 4 L5 7.3" fill="none" stroke="#8a7c64" stroke-width="1.65"/></svg>
<div class="lb" style="left:364.4px;top:478.9px">Flow Action Assist ?</div>
<div class="abs" style="left:364.5px;top:493.5px;width:8px;height:8px;border:1px solid #e9e9e9;background:#f7f7f7;border-radius:1px"></div>
<div class="lb" style="left:364.4px;top:511.1px">Launch Entry Name :</div>
<div class="in" style="left:364px;top:521px;width:219.8px;height:15px;line-height:16.18px;"></div>
<svg class="ic" style="left:596px;top:525.2px" width="9" height="8" viewBox="0 0 9 8" ><path d="M1 0.7 L4.1 4 L1 7.3 M5 0.7 L8.1 4 L5 7.3" fill="none" stroke="#8a7c64" stroke-width="1.65"/></svg>
<div class="lb" style="left:626.3px;top:414.4px">Attachments</div>
<svg class="ic" style="left:629px;top:427px" width="13" height="12" viewBox="0 0 13 12" ><path d="M9.6 3.4 L5 7.8 Q4.2 8.8 5 9.4 Q5.8 9.9 6.6 9.2 L10.8 5.2 Q12.4 3.4 10.8 1.8 Q9 0.4 7.2 2 L2.2 6.8 Q0.2 9 2 10.6 Q3.6 11.8 5.4 10.6 M7.4 9.6 Q8 10.8 9.2 10.2" fill="none" stroke="#646c82" stroke-width="1.25"/></svg>
<div class="lb" style="left:626.3px;top:446.6px">Inherit Status Changes ?</div>
<svg class="ic" style="left:626px;top:460.6px" width="10.4" height="10.6" viewBox="0 0 10.4 10.6" ><rect x="0.5" y="0.5" width="9.4" height="9.6" rx="1" fill="#f5f5f5" stroke="#b9b9b9" stroke-width="1"/><path d="M2.2 5 L4.4 7.6 L8.6 2.2" fill="none" stroke="#161616" stroke-width="1.7"/></svg>
<div class="lb" style="left:626.3px;top:478.9px">Accepts Charges ?</div>
<svg class="ic" style="left:626px;top:492.8px" width="10.4" height="10.6" viewBox="0 0 10.4 10.6" ><rect x="0.5" y="0.5" width="9.4" height="9.6" rx="1" fill="#f5f5f5" stroke="#b9b9b9" stroke-width="1"/><path d="M2.2 5 L4.4 7.6 L8.6 2.2" fill="none" stroke="#161616" stroke-width="1.7"/></svg>
<div class="lb" style="left:626.3px;top:511.1px">Owner :</div>
<div class="in" style="left:626px;top:521px;width:50.8px;height:15px;line-height:16.18px;"></div>
<svg class="ic" style="left:689px;top:525.2px" width="9" height="8" viewBox="0 0 9 8" ><path d="M1 0.7 L4.1 4 L1 7.3 M5 0.7 L8.1 4 L5 7.3" fill="none" stroke="#8a7c64" stroke-width="1.65"/></svg>
<div class="lb" style="left:626.3px;top:543.4px">Owner Group :</div>
<div class="in" style="left:626px;top:553px;width:50.8px;height:15px;line-height:16.68px;"></div>
<svg class="ic" style="left:689px;top:557.45px" width="9" height="8" viewBox="0 0 9 8" ><path d="M1 0.7 L4.1 4 L1 7.3 M5 0.7 L8.1 4 L5 7.3" fill="none" stroke="#8a7c64" stroke-width="1.65"/></svg>
<div class="abs" style="left:7px;top:581px;width:741px;height:1px;background:#cfcfcf"></div>
<div class="sec" style="left:7px;top:582px;width:734px;padding-left:7px;height:21px;line-height:21.5px">Work Reference and Measurement Information</div>
<div class="lb" style="left:18.3px;top:614.4px">Reference WO :</div>
<div class="in ro" style="left:18px;top:625px;width:50.8px;height:15px;line-height:16.18px;">457141</div>
<svg class="ic" style="left:76.3px;top:626.7px" width="8" height="8" viewBox="0 0 8 8" ><circle cx="3.8" cy="3.8" r="3.2" fill="#e6eef8" stroke="#b4c6e0" stroke-width="0.8"/><path d="M3.8 3.3v2.2" stroke="#6f8fc0" stroke-width="0.9"/><circle cx="3.8" cy="2.1" r="0.5" fill="#6f8fc0"/></svg>
<svg class="ic" style="left:92px;top:629.2px" width="9" height="8" viewBox="0 0 9 8" ><path d="M1 0.7 L4.1 4 L1 7.3 M5 0.7 L8.1 4 L5 7.3" fill="none" stroke="#8a7c64" stroke-width="1.65"/></svg>
<div class="lb" style="left:18.3px;top:646.7px">Location :</div>
<div class="in" style="left:18px;top:657px;width:50.8px;height:15px;line-height:16.68px;">11</div>
<svg class="ic" style="left:81.8px;top:661.45px" width="9" height="8" viewBox="0 0 9 8" ><path d="M1 0.7 L4.1 4 L1 7.3 M5 0.7 L8.1 4 L5 7.3" fill="none" stroke="#8a7c64" stroke-width="1.65"/></svg>
<div class="in ro" style="left:98px;top:657px;width:219.3px;height:15px;line-height:16.68px;">Séparation Humide</div>
<svg class="ic" style="left:329.5px;top:658.45px" width="13" height="12" viewBox="0 0 13 12" ><path d="M1.6 1.4 H9 V10.4 Q7.4 9.4 5.6 10.6 Q3.6 11.8 1.6 10.6 Z" fill="#fbfcfe" stroke="#a3b3d6" stroke-width="0.9"/><path d="M3.2 5.2h4.2M3.2 7h4.2M3.2 8.8h2.6" stroke="#d3d9e6" stroke-width="0.7"/><path d="M2.9 0 L3.75 1.75 L5.7 2 L4.3 3.35 L4.65 5.3 L2.9 4.35 L1.15 5.3 L1.5 3.35 L0.1 2 L2.05 1.75 Z" fill="#f6d23c" stroke="#ecc22a" stroke-width="0.3"/><path d="M10.6 1.2v7.4" stroke="#303c62" stroke-width="0.8"/><path d="M9.1 7.8h3l-1.5 2.1z" fill="#303c62"/></svg>
<div class="lb" style="left:18.3px;top:678.9px">Asset :</div>
<div class="in" style="left:18px;top:690px;width:50.8px;height:14px;line-height:15.18px;">11MOT12M5</div>
<svg class="ic" style="left:76.3px;top:691.2px" width="8" height="8" viewBox="0 0 8 8" ><circle cx="3.8" cy="3.8" r="3.2" fill="#e6eef8" stroke="#b4c6e0" stroke-width="0.8"/><path d="M3.8 3.3v2.2" stroke="#6f8fc0" stroke-width="0.9"/><circle cx="3.8" cy="2.1" r="0.5" fill="#6f8fc0"/></svg>
<svg class="ic" style="left:92px;top:693.7px" width="9" height="8" viewBox="0 0 9 8" ><path d="M1 0.7 L4.1 4 L1 7.3 M5 0.7 L8.1 4 L5 7.3" fill="none" stroke="#8a7c64" stroke-width="1.65"/></svg>
<div class="in ro" style="left:109px;top:690px;width:219.3px;height:14px;line-height:15.18px;">Moteur 12M5</div>
<svg class="ic" style="left:340px;top:690.7px" width="14" height="13" viewBox="0 0 14 13" ><path d="M2.6 1.6 H11 V6.2 L11 10.4 L8.6 8.8 L6.2 10.8 L3.8 9.6 Q2.6 9.4 2.6 7.6 Z" fill="#e8eff9" stroke="#8da3cc" stroke-width="0.9"/><path d="M5.6 3.6h4.4M5.6 5.4h4.4" stroke="#a9bbdc" stroke-width="0.8"/><path d="M3 0.2 L3.85 1.95 L5.8 2.2 L4.4 3.55 L4.75 5.5 L3 4.55 L1.25 5.5 L1.6 3.55 L0.2 2.2 L2.15 1.95 Z" fill="#f6d23c" stroke="#ecc22a" stroke-width="0.3"/><path d="M12 1.4v6" stroke="#2f3f6c" stroke-width="1"/><path d="M10 7.2h4l-2 2.3z" fill="#2f3f6c"/></svg>
<div class="lb" style="left:371.3px;top:614.4px">Service Group :</div>
<div class="in" style="left:371px;top:625px;width:50.8px;height:15px;line-height:16.18px;"></div>
<svg class="ic" style="left:432.6px;top:627.2px" width="12" height="12" viewBox="0 0 12 12" ><circle cx="4.5" cy="4.5" r="3.8" fill="#d3deec" stroke="#97a6bd" stroke-width="1.3"/><path d="M2.6 3.4 Q3.4 2.2 4.8 2.2" fill="none" stroke="#f2f6fb" stroke-width="0.9"/><path d="M7.6 7.6 L10.6 10.6" stroke="#a8957c" stroke-width="1.9" stroke-linecap="round"/></svg>
<div class="lb" style="left:371.3px;top:646.7px">Service :</div>
<div class="in" style="left:371px;top:657px;width:50.8px;height:15px;line-height:16.68px;"></div>
<svg class="ic" style="left:432.6px;top:659.45px" width="12" height="12" viewBox="0 0 12 12" ><circle cx="4.5" cy="4.5" r="3.8" fill="#d3deec" stroke="#97a6bd" stroke-width="1.3"/><path d="M2.6 3.4 Q3.4 2.2 4.8 2.2" fill="none" stroke="#f2f6fb" stroke-width="0.9"/><path d="M7.6 7.6 L10.6 10.6" stroke="#a8957c" stroke-width="1.9" stroke-linecap="round"/></svg>
<div class="lb" style="left:464.2px;top:614.4px">Observation :</div>
<div class="in" style="left:464px;top:625px;width:50.8px;height:15px;line-height:16.18px;"></div>
<div class="lb" style="left:464.2px;top:646.7px">Inspector :</div>
<div class="in" style="left:464px;top:657px;width:50.8px;height:15px;line-height:16.68px;"></div>
<svg class="ic" style="left:527px;top:661.45px" width="9" height="8" viewBox="0 0 9 8" ><path d="M1 0.7 L4.1 4 L1 7.3 M5 0.7 L8.1 4 L5 7.3" fill="none" stroke="#8a7c64" stroke-width="1.65"/></svg>
<div class="lb" style="left:464.2px;top:678.9px">Measurement Point :</div>
<div class="in" style="left:464px;top:690px;width:50.8px;height:14px;line-height:15.18px;"></div>
<svg class="ic" style="left:527px;top:693.7px" width="9" height="8" viewBox="0 0 9 8" ><path d="M1 0.7 L4.1 4 L1 7.3 M5 0.7 L8.1 4 L5 7.3" fill="none" stroke="#8a7c64" stroke-width="1.65"/></svg>
<div class="lb" style="left:464.2px;top:711.2px">Measurement Value :</div>
<div class="in" style="left:464px;top:722px;width:50.8px;height:14px;line-height:15.68px;"></div>
<div class="lb" style="left:464.2px;top:743.4px">Measurement Date :</div>
<div class="in" style="left:464px;top:754px;width:89.8px;height:15px;line-height:16.18px;"></div>
<svg class="ic" style="left:565px;top:755.2px" width="14" height="13.4" viewBox="0 0 14 13.4" ><rect x="0.6" y="1.6" width="8.6" height="8.4" fill="#f4f5fa" stroke="#5c618c" stroke-width="1"/><rect x="0.6" y="1.6" width="8.6" height="1.9" fill="#5c618c"/><path d="M2.4 0.4v1.6M4.9 0.4v1.6M7.4 0.4v1.6" stroke="#5c618c" stroke-width="0.9"/><path d="M2.2 5.2h1.5M4.6 5.2h1.5M2.2 7.4h1.5M4.6 6.4h1.6" stroke="#4a4f7c" stroke-width="1.1"/><circle cx="9.2" cy="8.6" r="3.5" fill="#f3f7fb" stroke="#7c8ea6" stroke-width="1.1"/><path d="M9.3 6.6v2.2" fill="none" stroke="#3a3f55" stroke-width="1"/></svg>
<div class="abs" style="left:11px;top:778px;width:409px;height:1px;background:#d9d9d9"></div>
<div class="sec" style="left:11px;top:779px;width:403px;height:20px;line-height:19.5px">Scheduling Information</div>
<div class="lb" style="left:22.4px;top:811.4px">Target Start :</div>
<div class="in" style="left:22px;top:821px;width:89.8px;height:15px;line-height:16.38px;">09.05.24 00:00</div>
<svg class="ic" style="left:123.3px;top:822.9px" width="14" height="13.4" viewBox="0 0 14 13.4" ><rect x="0.6" y="1.6" width="8.6" height="8.4" fill="#f4f5fa" stroke="#5c618c" stroke-width="1"/><rect x="0.6" y="1.6" width="8.6" height="1.9" fill="#5c618c"/><path d="M2.4 0.4v1.6M4.9 0.4v1.6M7.4 0.4v1.6" stroke="#5c618c" stroke-width="0.9"/><path d="M2.2 5.2h1.5M4.6 5.2h1.5M2.2 7.4h1.5M4.6 6.4h1.6" stroke="#4a4f7c" stroke-width="1.1"/><circle cx="9.2" cy="8.6" r="3.5" fill="#f3f7fb" stroke="#7c8ea6" stroke-width="1.1"/><path d="M9.3 6.6v2.2" fill="none" stroke="#3a3f55" stroke-width="1"/></svg>
<div class="lb" style="left:22.4px;top:843.6px">Target Finish :</div>
<div class="in" style="left:22px;top:854px;width:89.8px;height:14px;line-height:14.88px;">09.05.24 00:00</div>
<svg class="ic" style="left:123.3px;top:855.15px" width="14" height="13.4" viewBox="0 0 14 13.4" ><rect x="0.6" y="1.6" width="8.6" height="8.4" fill="#f4f5fa" stroke="#5c618c" stroke-width="1"/><rect x="0.6" y="1.6" width="8.6" height="1.9" fill="#5c618c"/><path d="M2.4 0.4v1.6M4.9 0.4v1.6M7.4 0.4v1.6" stroke="#5c618c" stroke-width="0.9"/><path d="M2.2 5.2h1.5M4.6 5.2h1.5M2.2 7.4h1.5M4.6 6.4h1.6" stroke="#4a4f7c" stroke-width="1.1"/><circle cx="9.2" cy="8.6" r="3.5" fill="#f3f7fb" stroke="#7c8ea6" stroke-width="1.1"/><path d="M9.3 6.6v2.2" fill="none" stroke="#3a3f55" stroke-width="1"/></svg>
<div class="lb" style="left:22.4px;top:875.9px">Scheduled Start :</div>
<div class="in" style="left:22px;top:886px;width:89.8px;height:14px;line-height:15.38px;"></div>
<svg class="ic" style="left:123.3px;top:887.4px" width="14" height="13.4" viewBox="0 0 14 13.4" ><rect x="0.6" y="1.6" width="8.6" height="8.4" fill="#f4f5fa" stroke="#5c618c" stroke-width="1"/><rect x="0.6" y="1.6" width="8.6" height="1.9" fill="#5c618c"/><path d="M2.4 0.4v1.6M4.9 0.4v1.6M7.4 0.4v1.6" stroke="#5c618c" stroke-width="0.9"/><path d="M2.2 5.2h1.5M4.6 5.2h1.5M2.2 7.4h1.5M4.6 6.4h1.6" stroke="#4a4f7c" stroke-width="1.1"/><circle cx="9.2" cy="8.6" r="3.5" fill="#f3f7fb" stroke="#7c8ea6" stroke-width="1.1"/><path d="M9.3 6.6v2.2" fill="none" stroke="#3a3f55" stroke-width="1"/></svg>
<div class="lb" style="left:22.4px;top:908.1px">Scheduled Finish :</div>
<div class="in" style="left:22px;top:918px;width:89.8px;height:15px;line-height:15.88px;"></div>
<svg class="ic" style="left:123.3px;top:919.65px" width="14" height="13.4" viewBox="0 0 14 13.4" ><rect x="0.6" y="1.6" width="8.6" height="8.4" fill="#f4f5fa" stroke="#5c618c" stroke-width="1"/><rect x="0.6" y="1.6" width="8.6" height="1.9" fill="#5c618c"/><path d="M2.4 0.4v1.6M4.9 0.4v1.6M7.4 0.4v1.6" stroke="#5c618c" stroke-width="0.9"/><path d="M2.2 5.2h1.5M4.6 5.2h1.5M2.2 7.4h1.5M4.6 6.4h1.6" stroke="#4a4f7c" stroke-width="1.1"/><circle cx="9.2" cy="8.6" r="3.5" fill="#f3f7fb" stroke="#7c8ea6" stroke-width="1.1"/><path d="M9.3 6.6v2.2" fill="none" stroke="#3a3f55" stroke-width="1"/></svg>
<div class="lb" style="left:154.6px;top:811.4px">Actual Start :</div>
<div class="in" style="left:154px;top:821px;width:90.39999999999999px;height:15px;line-height:16.38px;"></div>
<svg class="ic" style="left:254.8px;top:822.9px" width="14" height="13.4" viewBox="0 0 14 13.4" ><rect x="0.6" y="1.6" width="8.6" height="8.4" fill="#f4f5fa" stroke="#5c618c" stroke-width="1"/><rect x="0.6" y="1.6" width="8.6" height="1.9" fill="#5c618c"/><path d="M2.4 0.4v1.6M4.9 0.4v1.6M7.4 0.4v1.6" stroke="#5c618c" stroke-width="0.9"/><path d="M2.2 5.2h1.5M4.6 5.2h1.5M2.2 7.4h1.5M4.6 6.4h1.6" stroke="#4a4f7c" stroke-width="1.1"/><circle cx="9.2" cy="8.6" r="3.5" fill="#f3f7fb" stroke="#7c8ea6" stroke-width="1.1"/><path d="M9.3 6.6v2.2" fill="none" stroke="#3a3f55" stroke-width="1"/></svg>
<div class="lb" style="left:154.6px;top:843.6px">Actual Finish :</div>
<div class="in" style="left:154px;top:854px;width:90.39999999999999px;height:14px;line-height:14.88px;"></div>
<svg class="ic" style="left:254.8px;top:855.15px" width="14" height="13.4" viewBox="0 0 14 13.4" ><rect x="0.6" y="1.6" width="8.6" height="8.4" fill="#f4f5fa" stroke="#5c618c" stroke-width="1"/><rect x="0.6" y="1.6" width="8.6" height="1.9" fill="#5c618c"/><path d="M2.4 0.4v1.6M4.9 0.4v1.6M7.4 0.4v1.6" stroke="#5c618c" stroke-width="0.9"/><path d="M2.2 5.2h1.5M4.6 5.2h1.5M2.2 7.4h1.5M4.6 6.4h1.6" stroke="#4a4f7c" stroke-width="1.1"/><circle cx="9.2" cy="8.6" r="3.5" fill="#f3f7fb" stroke="#7c8ea6" stroke-width="1.1"/><path d="M9.3 6.6v2.2" fill="none" stroke="#3a3f55" stroke-width="1"/></svg>
<div class="lb" style="left:154.9px;top:875.9px"><span class="req">*</span>Estimated Duration :</div>
<div class="in" style="left:154px;top:886px;width:50.8px;height:14px;line-height:15.38px;text-align:right;">0:00</div>
<div class="lb" style="left:154.6px;top:908.1px">Time Remaining :</div>
<div class="in" style="left:154px;top:918px;width:50.8px;height:15px;line-height:15.88px;"></div>
<div class="lb" style="left:154.6px;top:940.4px">Predecessors :</div>
<div class="in ro" style="left:154px;top:950px;width:219.8px;height:15px;line-height:16.38px;"></div>
<svg class="ic" style="left:386px;top:954.3px" width="9" height="8" viewBox="0 0 9 8" ><path d="M1 0.7 L4.1 4 L1 7.3 M5 0.7 L8.1 4 L5 7.3" fill="none" stroke="#8a7c64" stroke-width="1.65"/></svg>
<div class="abs" style="left:692px;top:983px;width:53px;height:13px;border:1px solid #c9c9c9;background:#ededed;border-radius:2px;font-size:8.25px;color:#222;line-height:13.5px;text-align:center;-webkit-text-stroke:0.2px #222">New Row</div>
<div class="abs" style="left:6px;top:1039px;width:743px;height:1px;background:#d0d0d0"></div>
<div class="tab" style="left:16.5px;width:35.5px;top:1019px;height:19px;background:#fff;border-top:2px solid #2a8aa0;color:#222;line-height:18px">Labor</div>
<div class="tab" style="left:60.1px;width:49.699999999999996px;top:1019px;height:20px;line-height:20px">Materials</div>
<div class="tab" style="left:117.9px;width:48.10000000000001px;top:1019px;height:20px;line-height:20px">Services</div>
<div class="tab" style="left:174.1px;width:32.500000000000014px;top:1019px;height:20px;line-height:20px">Tools</div>
<div class="hd" style="left:15.6px;top:1052px">Labor</div>
<svg class="ic" style="left:62.3px;top:1053.1px" width="7.2" height="10.8" viewBox="0 0 7.2 10.8" ><path d="M0.5 0.5 L6.5 5.4 L0.5 10.3 Z" fill="#7ea3d2" stroke="#4467a2" stroke-width="0.9"/></svg><div class="tx" style="left:75.39999999999999px;top:1054.8px"><a class="fl">Filter</a></div><svg class="ic" style="left:106px;top:1055.3px" width="4" height="6" viewBox="0 0 4 6" ><path d="M0.6 0.5 L3.4 3 L0.6 5.5" fill="none" stroke="#8c8c8c" stroke-width="1.1"/></svg><svg class="ic" style="left:115px;top:1053.3px" width="10" height="10" viewBox="0 0 10 10" ><g opacity="0.09"><circle cx="4" cy="4" r="3" fill="#c8c8c8" stroke="#777"/><path d="M6.4 6.4 L9.4 9.4" stroke="#777" stroke-width="1.6"/></g></svg><svg class="ic" style="left:140px;top:1053.3px" width="10" height="10" viewBox="0 0 10 10" ><g opacity="0.1"><path d="M1 9 L8 1.6 L9 2.8 L2.4 9.4 Z" fill="#999" stroke="#777" stroke-width="0.6"/></g></svg>
<svg class="ic" style="left:170px;top:1054px" width="12" height="12" viewBox="0 0 12 12" preserveAspectRatio="none"><g transform="rotate(-90 6 6)"><path d="M11.4 6 L5.8 0.6 L5.8 3.6 L0.6 3.6 L0.6 8.4 L5.8 8.4 L5.8 11.4 Z" fill="#eef1ee" stroke="#e9ece9" stroke-width="0.9" stroke-linejoin="round" opacity="1"/><path d="M1.4 4.6 H6.6 V2.6 L9.6 5.4" fill="none" stroke="#fff" stroke-width="0.7" opacity="0.35"/></g></svg>
<svg class="ic" style="left:188px;top:1054px" width="12" height="12" viewBox="0 0 12 12" preserveAspectRatio="none"><g transform="rotate(90 6 6)"><path d="M11.4 6 L5.8 0.6 L5.8 3.6 L0.6 3.6 L0.6 8.4 L5.8 8.4 L5.8 11.4 Z" fill="#eef1ee" stroke="#e9ece9" stroke-width="0.9" stroke-linejoin="round" opacity="1"/><path d="M1.4 4.6 H6.6 V2.6 L9.6 5.4" fill="none" stroke="#fff" stroke-width="0.7" opacity="0.35"/></g></svg>
<svg class="ic" style="left:216px;top:1054px" width="12" height="12" viewBox="0 0 12 12" preserveAspectRatio="none"><g transform="rotate(180 6 6)"><path d="M11.4 6 L5.8 0.6 L5.8 3.6 L0.6 3.6 L0.6 8.4 L5.8 8.4 L5.8 11.4 Z" fill="#eef1ee" stroke="#e9ece9" stroke-width="0.9" stroke-linejoin="round" opacity="1"/><path d="M1.4 4.6 H6.6 V2.6 L9.6 5.4" fill="none" stroke="#fff" stroke-width="0.7" opacity="0.35"/></g></svg>
<div class="abs mono" style="left:230px;top:1053.5px;line-height:11px">0 - 0 of 0</div>
<svg class="ic" style="left:287px;top:1054px" width="12" height="12" viewBox="0 0 12 12" preserveAspectRatio="none"><g transform="rotate(0 6 6)"><path d="M11.4 6 L5.8 0.6 L5.8 3.6 L0.6 3.6 L0.6 8.4 L5.8 8.4 L5.8 11.4 Z" fill="#eef1ee" stroke="#e9ece9" stroke-width="0.9" stroke-linejoin="round" opacity="1"/><path d="M1.4 4.6 H6.6 V2.6 L9.6 5.4" fill="none" stroke="#fff" stroke-width="0.7" opacity="0.35"/></g></svg>
<svg class="ic" style="left:365px;top:1055px" width="11" height="9" viewBox="0 0 11 9" ><g opacity="0.3"><rect x="0.5" y="1.5" width="5" height="6" fill="#f2f2f2" stroke="#9a9a9a" stroke-width="0.8"/><path d="M7.5 0.5v5M5.4 4l2.1 2.6L9.6 4z" fill="#555" stroke="#555" stroke-width="0.9"/></g></svg>
<svg class="ic" style="left:399px;top:1055px" width="7" height="5" viewBox="0 0 7 5" ><g opacity="0.8"><rect x="0.5" y="0.5" width="6" height="3.6" fill="#fff" stroke="#555" stroke-width="0.9"/><rect x="0.5" y="0.5" width="6" height="1.6" fill="#555"/></g></svg>
</body></html>
